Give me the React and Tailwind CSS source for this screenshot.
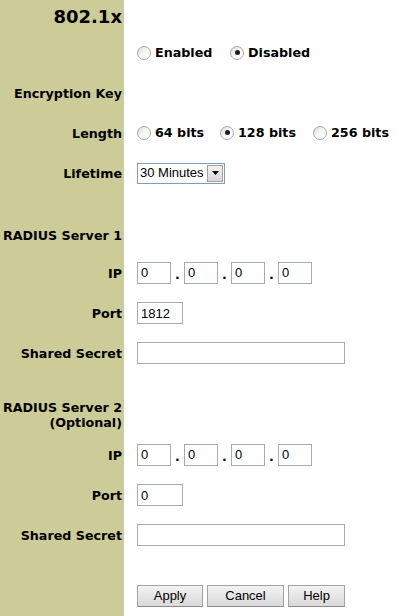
import React from 'react';

const labelFont = "font-['DejaVu_Sans',Verdana,sans-serif]";
const inputFont = "font-['Liberation_Sans',Arial,sans-serif]";

function Row({ label, h, children, title }) {
    return (
        <div className="flex" style={{ height: h }}>
            <div className={`w-[124px] shrink-0 bg-[#cccc99] flex items-center justify-end pr-[2px] text-right ${labelFont} font-bold text-black ${title ? 'text-[18px]' : 'text-[12.7px] leading-[15px]'}`}>
                {label}
            </div>
            <div className="flex-1 flex items-center pl-[13px]">{children}</div>
        </div>
    );
}

function Radio({ checked }) {
    return (
        <span className="relative w-[14px] h-[14px] shrink-0 rounded-full border border-[#a4a9ae] bg-gradient-to-br from-[#d9d9d2] via-[#f8f8f6] to-white flex items-center justify-center">
            {checked && <span className="w-[5px] h-[5px] rounded-full bg-[#1a1a1a]" />}
        </span>
    );
}

function Option({ label, checked, w }) {
    return (
        <div className={`flex items-center ${w}`}>
            <Radio checked={checked} />
            <span className={`ml-[4px] ${labelFont} font-bold text-[12.7px] text-black`}>{label}</span>
        </div>
    );
}

function TextBox({ value, w }) {
    return (
        <input
            defaultValue={value}
            className={`${w} h-[22px] border border-[#a5acb2] bg-white px-[3px] ${inputFont} text-[13px] text-black outline-none`}
        />
    );
}

function IpFields() {
    return (
        <div className="flex items-center">
            {[0, 1, 2, 3].map(i => (
                <React.Fragment key={i}>
                    {i > 0 && <span className={`w-[13px] text-center ${labelFont} font-bold text-[12.7px] pt-[4px]`}>.</span>}
                    <TextBox value="0" w="w-[34px]" />
                </React.Fragment>
            ))}
        </div>
    );
}

function Btn({ children, w }) {
    return (
        <button className={`${w} h-[22px] border border-[#a3a3a3] border-b-[#8c8c8c] bg-gradient-to-b from-[#f3f3f3] to-[#d9d9d9] ${inputFont} text-[13px] text-black`}>
            {children}
        </button>
    );
}

export default function App() {
    return (
        <div className="w-[398px] h-[616px] flex flex-col bg-white overflow-hidden">
            <Row label="802.1x" h={33} title />
            <Row label="" h={40}>
                <Option label="Enabled" w="w-[93px]" />
                <Option label="Disabled" checked />
            </Row>
            <Row label="Encryption Key" h={40} />
            <Row label="Length" h={40}>
                <Option label="64 bits" w="w-[83px]" />
                <Option label="128 bits" checked w="w-[93px]" />
                <Option label="256 bits" />
            </Row>
            <Row label="Lifetime" h={40}>
                <div className="w-[88px] h-[21px] border border-[#7f9db9] bg-white flex items-center justify-between pl-[2px] pr-[1px]">
                    <span className={`${inputFont} text-[13px] text-black`}>30 Minutes</span>
                    <span className="w-[16px] h-[17px] border border-[#a0a0a0] bg-gradient-to-b from-[#f2f2f2] to-[#d6d6d6] flex items-center justify-center">
                        <svg width="7" height="4" viewBox="0 0 7 4"><path d="M0 0h7L3.5 4z" fill="#000" /></svg>
                    </span>
                </div>
            </Row>
            <Row label="" h={24} />
            <Row label="RADIUS Server 1" h={36} />
            <Row label="IP" h={40}><IpFields /></Row>
            <Row label="Port" h={40}><TextBox value="1812" w="w-[46px]" /></Row>
            <Row label="Shared Secret" h={40}><TextBox value="" w="w-[208px]" /></Row>
            <Row label="" h={22} />
            <Row label={<>RADIUS Server 2<br />(Optional)</>} h={40} />
            <Row label="IP" h={40}><IpFields /></Row>
            <Row label="Port" h={40}><TextBox value="0" w="w-[46px]" /></Row>
            <Row label="Shared Secret" h={40}><TextBox value="" w="w-[208px]" /></Row>
            <Row label="" h={21} />
            <Row label="" h={40}>
                <div className="flex gap-[4px]">
                    <Btn w="w-[66px]">Apply</Btn>
                    <Btn w="w-[77px]">Cancel</Btn>
                    <Btn w="w-[57px]">Help</Btn>
                </div>
            </Row>
        </div>
    );
}
